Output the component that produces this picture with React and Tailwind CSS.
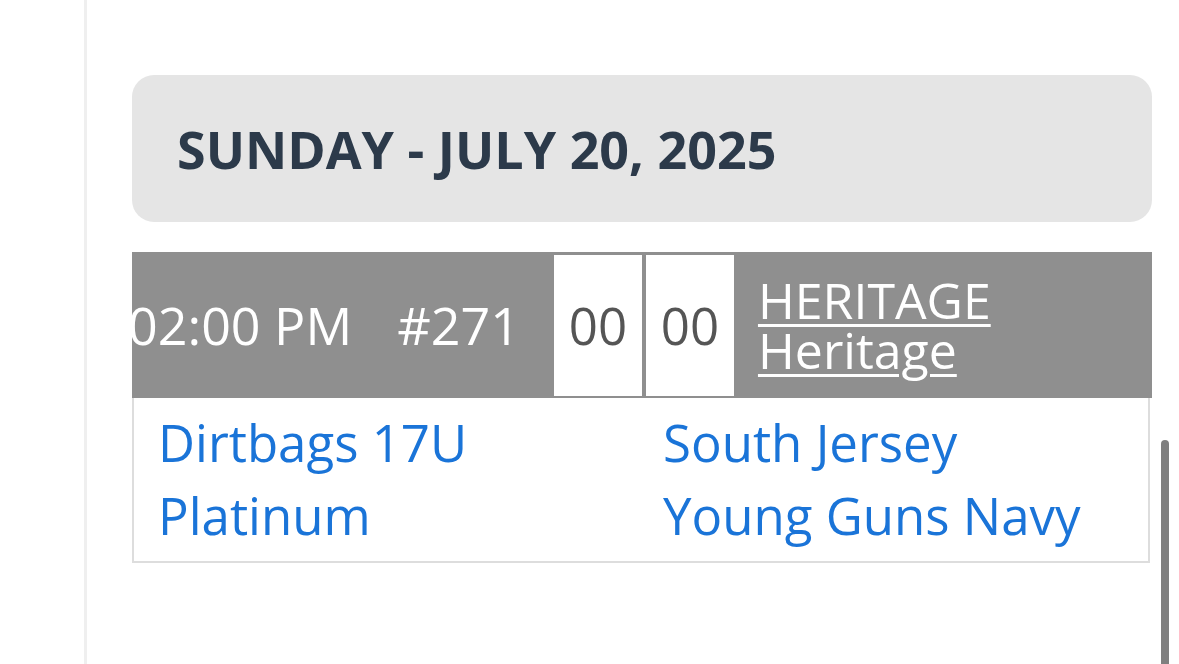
export default function App() {
  return (
    <div
      className="relative h-[664px] w-[1179px] overflow-hidden bg-white"
      style={{ fontFamily: '"Open Sans", "Liberation Sans", sans-serif' }}
    >
      <div className="flex h-full">
        {/* left rail */}
        <div className="ml-[84px] w-[3px] shrink-0 bg-[#efefef]" />

        <div className="ml-[45px] w-[1020px] pt-[75px]">
          {/* Date header */}
          <div className="flex h-[147px] items-center rounded-[22px] bg-[#e5e5e5] pl-[45px]">
            <h2 className="text-[52px] font-bold leading-none text-[#2c3a4a]">
              SUNDAY - JULY 20, 2025
            </h2>
          </div>

          {/* Game row */}
          <div className="mt-[30px] flex h-[146px] items-stretch overflow-hidden bg-[#8f8f8f]">
            <div className="flex items-center text-[52px] leading-none text-white">
              <span className="-ml-[4px]">02:00 PM</span>
              <span className="ml-[45px]">#271</span>
            </div>
            <div className="ml-[34px] flex gap-[4px] pb-[2px] pt-[3px]">
              <div className="flex w-[88px] items-center justify-center bg-white text-[51px] text-[#555]">
                00
              </div>
              <div className="flex w-[88px] items-center justify-center bg-white text-[51px] text-[#555]">
                00
              </div>
            </div>
            <div className="ml-[24px] flex flex-col justify-center text-[50px] leading-[50px] text-white">
              <a href="#" className="underline decoration-[3px] underline-offset-[5px]">HERITAGE</a>
              <a href="#" className="underline decoration-[3px] underline-offset-[5px]">Heritage</a>
            </div>
          </div>

          {/* Teams */}
          <div className="mr-[2px] grid h-[165px] grid-cols-2 border-x-2 border-b-2 border-[#dddddd] pt-[8px] text-[51px] leading-[73px] text-[#1a74d8]">
            <a href="#" className="pl-[24px]">Dirtbags 17U<br />Platinum</a>
            <a href="#" className="pl-[22px]">South Jersey<br />Young Guns Navy</a>
          </div>
        </div>
      </div>

      {/* scroll indicator */}
      <div className="absolute left-[1161px] top-[440px] h-[240px] w-[8px] rounded-full bg-[#7f7f7f]" />
    </div>
  );
}
